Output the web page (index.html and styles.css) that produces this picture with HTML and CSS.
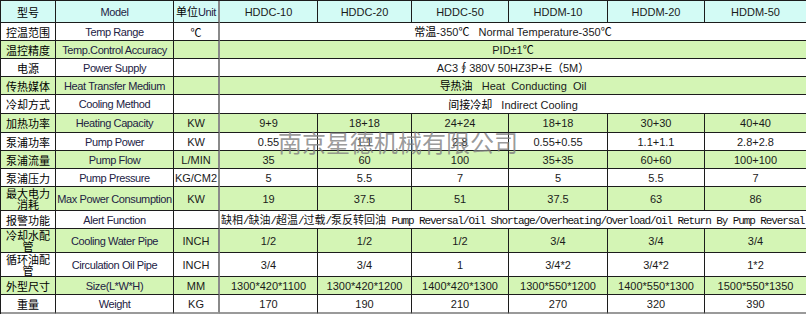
FILE: index.html
```html
<!DOCTYPE html>
<html>
<head>
<meta charset="utf-8">
<title>Spec</title>
<link rel="stylesheet" href="styles.css">
</head>
<body>
<div class="wrap">
  <div class="spec">
    <div class="row hd">
      <div class="c zh">型号</div><div class="c en">Model</div><div class="c u"><span><span class="zh">单位</span><span class="en">Unit</span></span></div>
      <div class="c">HDDC-10</div><div class="c">HDDC-20</div><div class="c">HDDC-50</div><div class="c">HDDM-10</div><div class="c">HDDM-20</div><div class="c">HDDM-50</div>
    </div>
    <div class="row wh">
      <div class="c zh">控温范围</div><div class="c en">Temp Range</div><div class="c u zh">℃</div>
      <div class="c span6"><span><span class="zh">常温</span>-350<span class="zh">℃</span>&nbsp;&nbsp;&nbsp;Normal Temperature-350<span class="zh">℃</span></span></div>
    </div>
    <div class="row gr">
      <div class="c zh">温控精度</div><div class="c en">Temp.Control Accuracy</div><div class="c u"></div>
      <div class="c span6"><span>PID±1<span class="zh">℃</span></span></div>
    </div>
    <div class="row wh">
      <div class="c zh">电源</div><div class="c en">Power Supply</div><div class="c u"></div>
      <div class="c span6"><span>AC3<span class="zh">∮</span>380V 50HZ3P+E<span class="zh">（</span>5M<span class="zh">）</span></span></div>
    </div>
    <div class="row gr">
      <div class="c zh">传热媒体</div><div class="c en">Heat Transfer Medium</div><div class="c u"></div>
      <div class="c span6"><span><span class="zh">导热油</span>&nbsp;&nbsp;&nbsp;Heat&nbsp;&nbsp;Conducting&nbsp;&nbsp;Oil</span></div>
    </div>
    <div class="row wh">
      <div class="c zh">冷却方式</div><div class="c en">Cooling Method</div><div class="c u"></div>
      <div class="c span6"><span><span class="zh">间接冷却</span>&nbsp;&nbsp;&nbsp;Indirect Cooling</span></div>
    </div>
    <div class="row gr">
      <div class="c zh">加热功率</div><div class="c en">Heating Capacity</div><div class="c u">KW</div>
      <div class="c">9+9</div><div class="c">18+18</div><div class="c">24+24</div><div class="c">18+18</div><div class="c">30+30</div><div class="c">40+40</div>
    </div>
    <div class="row wh">
      <div class="c zh">泵浦功率</div><div class="c en">Pump Power</div><div class="c u">KW</div>
      <div class="c">0.55</div><div class="c">1.1</div><div class="c">2.8</div><div class="c">0.55+0.55</div><div class="c">1.1+1.1</div><div class="c">2.8+2.8</div>
    </div>
    <div class="row gr">
      <div class="c zh">泵浦流量</div><div class="c en">Pump Flow</div><div class="c u">L/MIN</div>
      <div class="c">35</div><div class="c">60</div><div class="c">100</div><div class="c">35+35</div><div class="c">60+60</div><div class="c">100+100</div>
    </div>
    <div class="row wh">
      <div class="c zh">泵浦压力</div><div class="c en">Pump Pressure</div><div class="c u">KG/CM2</div>
      <div class="c">5</div><div class="c">5.5</div><div class="c">7</div><div class="c">5</div><div class="c">5.5</div><div class="c">7</div>
    </div>
    <div class="row gr">
      <div class="c zh two"><span>最大电力<br>消耗</span></div><div class="c en">Max Power Consumption</div><div class="c u">KW</div>
      <div class="c">19</div><div class="c">37.5</div><div class="c">51</div><div class="c">37.5</div><div class="c">63</div><div class="c">86</div>
    </div>
    <div class="row wh">
      <div class="c zh">报警功能</div><div class="c en">Alert Function</div><div class="c u"></div>
      <div class="c span6 alert"><span><span class="cj">缺相</span>/<span class="cj">缺油</span>/<span class="cj">超温</span>/<span class="cj">过载</span>/<span class="cj">泵反转回油</span> Pump Reversal/Oil Shortage/Overheating/Overload/Oil Return By Pump Reversal</span></div>
    </div>
    <div class="row gr">
      <div class="c zh two"><span>冷却水配<br>管</span></div><div class="c en">Cooling Water Pipe</div><div class="c u">INCH</div>
      <div class="c">1/2</div><div class="c">1/2</div><div class="c">1/2</div><div class="c">3/4</div><div class="c">3/4</div><div class="c">3/4</div>
    </div>
    <div class="row wh">
      <div class="c zh two"><span>循环油配<br>管</span></div><div class="c en">Circulation Oil Pipe</div><div class="c u">INCH</div>
      <div class="c">3/4</div><div class="c">3/4</div><div class="c">1</div><div class="c">3/4*2</div><div class="c">3/4*2</div><div class="c">1*2</div>
    </div>
    <div class="row gr">
      <div class="c zh">外型尺寸</div><div class="c en">Size(L*W*H)</div><div class="c u">MM</div>
      <div class="c">1300*420*1100</div><div class="c">1300*420*1200</div><div class="c">1400*420*1300</div><div class="c">1300*550*1200</div><div class="c">1400*550*1300</div><div class="c">1500*550*1350</div>
    </div>
    <div class="row wh last">
      <div class="c zh">重量</div><div class="c en">Weight</div><div class="c u">KG</div>
      <div class="c">170</div><div class="c">190</div><div class="c">210</div><div class="c">270</div><div class="c">320</div><div class="c">390</div>
    </div>
  </div>
  <div class="mark">南京星德机械有限公司</div>
</div>
</body>
</html>
```

FILE: styles.css
```css
html, body {
  margin: 0;
  padding: 0;
  background: #ffffff;
}

.wrap {
  position: relative;
  width: 806px;
  height: 314px;
  overflow: hidden;
}

.spec {
  display: grid;
  grid-template-columns: 55px 118px 46px 98px 94px 97px 99px 97px 102px;
  grid-template-rows: 22px 18px 18px 18px 18px 19px 19px 18px 18px 18px 24px 18px 24px 24px 18px 19px;
  width: 807px;
  border-top: 1px solid #1c1c1c;
  border-left: 1px solid #1c1c1c;
  font-family: "Liberation Sans", "Noto Sans CJK SC", sans-serif;
  font-size: 11px;
  line-height: 12px;
  color: #1a1a1a;
}

.row {
  display: contents;
}

.c {
  box-sizing: border-box;
  display: flex;
  align-items: center;
  justify-content: center;
  text-align: center;
  white-space: nowrap;
  overflow: hidden;
  border-right: 1px solid #1c1c1c;
  border-bottom: 1px solid #1c1c1c;
}

.c.u {
  border-right: 2px solid #8a8a8a;
}

.span6 {
  grid-column: span 6;
}

.last .c {
  border-bottom: 2px solid #9a9a9a;
}

.hd .c { background: #d3fbf5; }
.gr .c { background: #d4f5b5; }
.wh .c { background: #ffffff; }

.zh {
  font-family: "Noto Sans CJK SC", sans-serif;
  color: #000;
}

.en {
  letter-spacing: -0.4px;
  color: #222244;
}

.c.two {
  line-height: 11px;
  overflow: visible;
}

.alert {
  justify-content: flex-start;
  padding-left: 1px;
  font-family: "Liberation Mono", "Noto Sans CJK SC", monospace;
  letter-spacing: -1.1px;
  color: #111;
}

.alert .cj {
  font-family: "Noto Sans CJK SC", sans-serif;
  letter-spacing: 0;
}

.mark {
  position: absolute;
  left: 278px;
  top: 128px;
  font-family: "Noto Sans CJK SC", sans-serif;
  font-size: 24px;
  line-height: 28px;
  color: rgba(128, 128, 128, 0.8);
  white-space: nowrap;
  pointer-events: none;
}
```
